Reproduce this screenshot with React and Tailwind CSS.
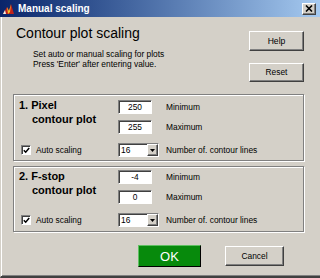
import React from 'react';

// Classic Win2000 3D edges
const raised =
  'bg-[#d4d0c8] border border-t-white border-l-white border-r-[#404040] border-b-[#404040] shadow-[inset_-1px_-1px_0_#808080]';
const sunken =
  'bg-white border border-t-[#808080] border-l-[#808080] border-r-white border-b-white shadow-[inset_1px_1px_0_#404040]';

const AppIcon = () => (
  <svg width="13" height="13" viewBox="0 0 13 13">
    <polygon points="1,12 5,5 7,9 9,2 12,12" fill="#c0221b" />
    <polygon points="5,5 7,9 9,2 8,10 6,12" fill="#f6c32a" />
    <polygon points="1,12 3,8 4,12" fill="#f4f0e0" />
  </svg>
);

const TitleBar = () => (
  <div className="h-[17px] shrink-0 flex items-center pl-[2px] bg-linear-to-r from-[#0a246a] to-[#a6caf0]">
    <AppIcon />
    <span className="ml-[3px] text-[10px] leading-none font-bold text-white">Manual scaling</span>
    <div className={`ml-auto mr-[4px] w-[14px] h-[12px] flex items-center justify-center ${raised}`}>
      <svg width="8" height="7" viewBox="0 0 8 7">
        <path d="M1 0.5 L7 6.5 M7 0.5 L1 6.5" stroke="black" strokeWidth="1.6" />
      </svg>
    </div>
  </div>
);

const Field = ({ value }) => (
  <div className={`w-[34px] h-[14px] flex items-center justify-center text-[8.4px] leading-none ${sunken}`}>
    {value}
  </div>
);

const Checkbox = () => (
  <div className={`w-[10px] h-[10px] flex items-center justify-center ${sunken}`}>
    <svg width="7" height="7" viewBox="0 0 7 7">
      <path d="M0.8 3.2 L2.7 5.2 L6.2 1" stroke="black" strokeWidth="1.5" fill="none" />
    </svg>
  </div>
);

const Dropdown = ({ value }) => (
  <div className={`w-[41px] h-[14px] flex ${sunken}`}>
    <span className="flex-1 pl-[2px] text-[8.4px] leading-[12px]">{value}</span>
    <div className={`w-[11px] flex items-center justify-center ${raised}`}>
      <svg width="5" height="3" viewBox="0 0 5 3">
        <polygon points="0,0 5,0 2.5,3" fill="black" />
      </svg>
    </div>
  </div>
);

const Label = ({ children }) => (
  <div className="h-[14px] pl-[7px] flex items-center text-[8.4px] leading-none whitespace-nowrap">{children}</div>
);

const Section = ({ title, sub, min, max, lines, className, titleClass }) => (
  <div
    className={`ml-[12px] mr-[16px] border border-[#808080] shadow-[inset_1px_1px_0_#fff,1px_1px_0_#fff] grid grid-cols-[104px_41px_1fr] grid-rows-[20px_23px_14px] ${className}`}
  >
    <div className={`row-span-2 pl-[5px] text-[11px] leading-[13.5px] font-bold ${titleClass}`}>
      <div>{title}</div>
      <div className="pl-[13px]">{sub}</div>
    </div>
    <Field value={min} />
    <Label>Minimum</Label>
    <Field value={max} />
    <Label>Maximum</Label>
    <div className="pl-[7px] flex items-center gap-[5px]">
      <Checkbox />
      <span className="text-[8.4px] leading-none">Auto scaling</span>
    </div>
    <Dropdown value={lines} />
    <Label>Number of. contour lines</Label>
  </div>
);

export default function App() {
  return (
    <div className="w-[320px] h-[278px] bg-[#d4d0c8] flex flex-col overflow-hidden text-black font-['Liberation_Sans',Arial,sans-serif]">
      <TitleBar />
      <div className="flex-1 flex flex-col border-l border-l-[#d4d0c8] border-b-2 border-b-[#404040] shadow-[inset_1px_0_0_#fff,inset_0_-1px_0_#808080]">
        <div className="h-[77px] flex justify-between">
          <div className="ml-[15px] pt-[8px]">
            <h1 className="text-[14px] leading-[16px] font-normal">Contour plot scaling</h1>
            <div className="mt-[8px] pl-[17px] text-[8.4px] leading-[10px]">
              <p>Set auto or manual scaling for plots</p>
              <p>Press 'Enter' after entering value.</p>
            </div>
          </div>
          <div className="mr-[16px] pt-[14px] flex flex-col">
            <button className={`w-[55px] h-[20px] text-[8.6px] ${raised}`}>Help</button>
            <button className={`mt-[12px] w-[55px] h-[19px] text-[8.4px] ${raised}`}>Reset</button>
          </div>
        </div>

        <Section
          title="1. Pixel"
          sub="contour plot"
          min="250"
          max="255"
          lines="16"
          className="h-[67px] pt-[5px]"
          titleClass="-mt-px"
        />
        <Section
          title="2. F-stop"
          sub="contour plot"
          min="-4"
          max="0"
          lines="16"
          className="mt-[5px] h-[66px] pt-[3px]"
          titleClass=""
        />

        <div className="mt-[13px] ml-[137px] flex items-center">
          <button className="w-[63px] h-[22px] bg-[#078a0c] border border-t-[#5fc062] border-l-[#5fc062] border-r-black border-b-black text-white text-[13px] leading-none">
            OK
          </button>
          <button className={`ml-[24px] w-[59px] h-[20px] text-[8.4px] ${raised}`}>Cancel</button>
        </div>
      </div>
    </div>
  );
}
